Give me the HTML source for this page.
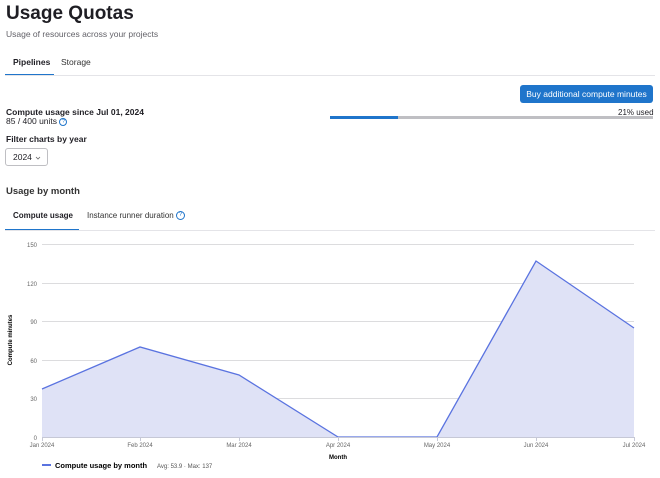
<!DOCTYPE html>
<html><head><style>
body{margin:0;width:660px;height:478px;background:#fff;font-family:"Liberation Sans",Arial,sans-serif;color:#1f1e24;position:relative;overflow:hidden}
.a{position:absolute;white-space:nowrap}
</style></head><body>
<div class="a" style="left:6px;top:3px;font-size:19px;font-weight:bold">Usage Quotas</div>
<div class="a" style="left:6px;top:29px;font-size:8.5px;color:#626168">Usage of resources across your projects</div>
<div class="a" style="left:13px;top:57px;font-size:8.5px;font-weight:bold">Pipelines</div>
<div class="a" style="left:61px;top:57px;font-size:8.5px;color:#333">Storage</div>
<div class="a" style="left:5px;top:74px;width:49px;height:2px;background:#1f75cb"></div>
<div class="a" style="left:5px;top:75px;width:650px;height:1px;background:#e4e4e8"></div>
<div class="a" style="left:520px;top:85px;width:133px;height:18px;background:#1f75cb;border-radius:3px;color:#fff;font-size:8.5px;line-height:18px;text-align:center">Buy additional compute minutes</div>
<div class="a" style="left:6px;top:107px;font-size:8.5px;font-weight:bold">Compute usage since Jul 01, 2024</div>
<div class="a" style="left:6px;top:116px;font-size:8.5px">85 / 400 units <span style="display:inline-block;width:6px;height:6px;border:1px solid #1f75cb;border-radius:50%;font-size:5px;line-height:6px;text-align:center;color:#1f75cb;vertical-align:middle">?</span></div>
<div class="a" style="left:618px;top:108px;font-size:8px">21% used</div>
<div class="a" style="left:330px;top:116px;width:323px;height:3px;background:#bfbfc3"></div>
<div class="a" style="left:330px;top:116px;width:68px;height:3px;background:#1f75cb"></div>
<div class="a" style="left:6px;top:134px;font-size:8.5px;font-weight:bold">Filter charts by year</div>
<div class="a" style="left:5px;top:148px;width:43px;height:18px;border:1px solid #bfbfc3;border-radius:3px;font-size:8.5px;line-height:17px;box-sizing:border-box;padding-left:7px">2024 <svg width="6" height="4" viewBox="0 0 6 4" style="vertical-align:middle;margin-left:1px"><path d="M1 1l2 2 2-2" fill="none" stroke="#666" stroke-width="0.8"/></svg></div>
<div class="a" style="left:6px;top:186px;font-size:9.5px;font-weight:bold;color:#333">Usage by month</div>
<div class="a" style="left:13px;top:211px;font-size:8px;font-weight:bold">Compute usage</div>
<div class="a" style="left:87px;top:211px;font-size:8px;color:#333">Instance runner duration <span style="display:inline-block;width:7px;height:7px;border:1px solid #1f75cb;border-radius:50%;font-size:6px;line-height:7px;text-align:center;color:#1f75cb;vertical-align:middle">?</span></div>
<div class="a" style="left:5px;top:229px;width:74px;height:2px;background:#1f75cb"></div>
<div class="a" style="left:5px;top:230px;width:650px;height:1px;background:#e4e4e8"></div>
<svg class="a" style="left:0;top:0" width="660" height="478" font-family="Liberation Sans,Arial,sans-serif">
<g stroke="#dcdcde" stroke-width="1">
<line x1="42" y1="244.5" x2="634" y2="244.5"/><line x1="42" y1="283.5" x2="634" y2="283.5"/><line x1="42" y1="321.5" x2="634" y2="321.5"/><line x1="42" y1="360.5" x2="634" y2="360.5"/><line x1="42" y1="398.5" x2="634" y2="398.5"/>
</g>
<path d="M42 389 L140 347 L239 375 L338 437 L437 437 L536 261 L634 328 L634 437 L42 437Z" fill="#dfe2f6"/>
<path d="M42 389 L140 347 L239 375 L338 437 L437 437 L536 261 L634 328" fill="none" stroke="#5a73e0" stroke-width="1.3"/>
<line x1="42" y1="437.5" x2="634" y2="437.5" stroke="#c6c8d6"/>
<g stroke="#c6c8d6"><line x1="42.5" y1="437" x2="42.5" y2="441"/><line x1="140.5" y1="437" x2="140.5" y2="441"/><line x1="239.5" y1="437" x2="239.5" y2="441"/><line x1="338.5" y1="437" x2="338.5" y2="441"/><line x1="437.5" y1="437" x2="437.5" y2="441"/><line x1="536.5" y1="437" x2="536.5" y2="441"/><line x1="634.5" y1="437" x2="634.5" y2="441"/></g>
<g font-size="6" fill="#666" text-anchor="end">
<text x="37" y="247">150</text><text x="37" y="286">120</text><text x="37" y="324">90</text><text x="37" y="363">60</text><text x="37" y="401">30</text><text x="37" y="440">0</text></g>
<g font-size="6" fill="#666" text-anchor="middle">
<text x="42" y="447">Jan 2024</text><text x="140" y="447">Feb 2024</text><text x="239" y="447">Mar 2024</text><text x="338" y="447">Apr 2024</text><text x="437" y="447">May 2024</text><text x="536" y="447">Jun 2024</text><text x="634" y="447">Jul 2024</text></g>
<text x="338" y="459" font-size="6" font-weight="bold" text-anchor="middle">Month</text>
<text transform="translate(12 340) rotate(-90)" font-size="6" font-weight="bold" text-anchor="middle">Compute minutes</text>
<rect x="42" y="464" width="9" height="2" fill="#5a73e0"/>
<text x="55" y="468" font-size="7.5" font-weight="bold">Compute usage by month</text>
<text x="157" y="468" font-size="6" fill="#555">Avg: 53.9 · Max: 137</text>
</svg>
</body></html>
